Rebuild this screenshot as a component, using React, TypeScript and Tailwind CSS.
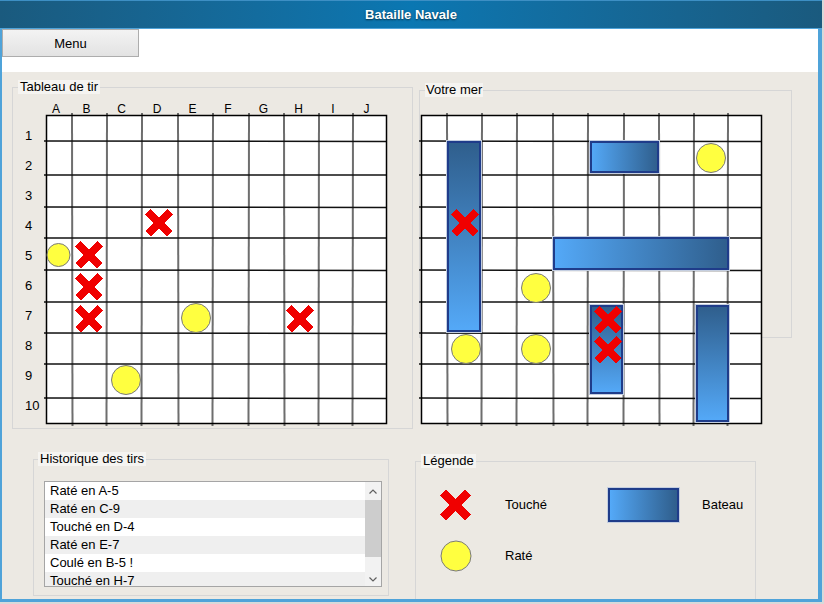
import React from 'react';

type Ship = { x: number; y: number; w: number; h: number; dir: 'v' | 'h' };
type Point = [number, number];
type Miss = [number, number, number?];

// positions of the hand-drawn grid lines (px, relative to the board)
const COLS = [0, 26, 61, 96, 132, 167, 203, 238, 273, 307, 340];
const ROWS = [0, 26, 60, 92, 123, 155, 187, 218, 249, 283, 308];

const LETTERS = ['A', 'B', 'C', 'D', 'E', 'F', 'G', 'H', 'I', 'J'];

const history = [
  'Raté en A-5',
  'Raté en C-9',
  'Touché en D-4',
  'Raté en E-7',
  'Coulé en B-5 !',
  'Touché en H-7',
];

const Cross = ({ cx, cy, r = 11, w = 8 }: { cx: number; cy: number; r?: number; w?: number }) => (
  <g transform={`translate(${cx} ${cy})`} shapeRendering="crispEdges">
    <line x1={-r} y1={-r} x2={r} y2={r} stroke="#f00000" strokeWidth={w} />
    <line x1={-r} y1={r} x2={r} y2={-r} stroke="#f00000" strokeWidth={w} />
  </g>
);

const Dot = ({ cx, cy, r = 14.5 }: { cx: number; cy: number; r?: number }) => (
  <circle cx={cx} cy={cy} r={r} fill="#ffff40" stroke="#7a7a7a" strokeWidth={1} />
);

const Board = ({ id, ships = [], hits, misses }: { id: string; ships?: Ship[]; hits: Point[]; misses: Miss[] }) => (
  <svg width={341} height={309} viewBox="0 0 341 309" className="block overflow-visible">
    <defs>
      <linearGradient id={`${id}-v`} x1="0" y1="0" x2="0" y2="1">
        <stop offset="0" stopColor="#2f5e8c" />
        <stop offset="1" stopColor="#54a9f8" />
      </linearGradient>
      <linearGradient id={`${id}-h`} x1="0" y1="0" x2="1" y2="0">
        <stop offset="0" stopColor="#54a9f8" />
        <stop offset="1" stopColor="#2f5e8c" />
      </linearGradient>
    </defs>
    <rect x={0} y={0} width={341} height={309} fill="#fff" />
    {COLS.slice(1, -1).map((x, i) => (
      <line key={'c' + i} x1={x} y1={-2} x2={x + (i % 3 === 0 ? 0.5 : -0.5)} y2={311} stroke="#4a4a4a" strokeWidth={2} strokeOpacity={0.8} />
    ))}
    {ROWS.slice(1, -1).map((y, i) => (
      <line key={'r' + i} x1={-2} y1={y} x2={340} y2={y + (i % 2 === 0 ? 0.5 : 0)} stroke="#111" strokeWidth={1.5} />
    ))}
    <rect x={0.5} y={0.5} width={340} height={308} fill="none" stroke="#000" strokeWidth={1.5} />
    {ships.map((s, i) => (
      <g key={'s' + i}>
        <rect x={s.x - 0.5} y={s.y - 0.5} width={s.w + 1} height={s.h + 1} fill="none" stroke="#c4cee0" strokeWidth={1} />
        <rect x={s.x + 1} y={s.y + 1} width={s.w - 2} height={s.h - 2} fill={`url(#${id}-${s.dir})`} stroke="#1f3c8a" strokeWidth={2} />
      </g>
    ))}
    {misses.map(([x, y, r], i) => (
      <Dot key={'m' + i} cx={x} cy={y} r={r ?? 14.5} />
    ))}
    {hits.map(([x, y], i) => (
      <Cross key={'h' + i} cx={x} cy={y} />
    ))}
  </svg>
);

const Chevron = ({ down = false }: { down?: boolean }) => (
  <svg width="8" height="5" viewBox="0 0 8 5">
    <polyline points={down ? '0.5,0.5 4,4 7.5,0.5' : '0.5,4.5 4,1 7.5,4.5'} fill="none" stroke="#606060" strokeWidth="1.2" />
  </svg>
);

export default function App() {
  return (
    <div className="w-[824px] h-[604px] bg-[#d9d9d9] font-[family-name:'Liberation_Sans',Arial,sans-serif] text-black">
      <div className="w-[822px] h-[602px] flex flex-col bg-[#4fa3d9]">
        {/* title bar */}
        <div className="h-[28px] flex items-center justify-center bg-gradient-to-r from-[#1a5a7e] via-[#0a77b2] to-[#1a5a7e] border-t border-[#3d8fc4]">
          <span className="text-white text-[13px] font-bold [text-shadow:0_1px_2px_rgba(0,0,0,0.6)]">Bataille Navale</span>
        </div>

        <div className="flex-1 flex flex-col ml-[2px] mr-[4px] mb-[3px] mt-[1px] min-h-0">
          {/* menu bar */}
          <div className="h-[43px] bg-white">
            <button className="w-[137px] h-[28px] border border-[#adadad] bg-gradient-to-b from-[#f3f3f3] to-[#e3e3e3] text-[13px] leading-none">
              Menu
            </button>
          </div>

          {/* content */}
          <div className="flex-1 bg-[#ece9e3] overflow-hidden">
            <div className="flex items-start pt-[8px] pl-[10px]">
              <fieldset className="w-[401px] h-[349px] border border-[#d6d6d6]">
                <legend className="ml-[5px] px-[2px] text-[13px] leading-[14px] bg-[#f5f4f1]">Tableau de tir</legend>
                <div className="mt-[10px] ml-[30px] h-[11px] grid grid-cols-[26px_35px_35px_36px_35px_36px_35px_35px_34px_33px] text-[12px] leading-[11px]">
                  {LETTERS.map((l) => (
                    <span key={l} className="text-center">{l}</span>
                  ))}
                </div>
                <div className="flex items-start">
                  <div className="w-[33px] pl-[12px] mt-[6px] flex flex-col text-[13px]">
                    {Array.from({ length: 10 }, (_, i) => (
                      <span key={i} className="h-[30px] leading-[30px]">{i + 1}</span>
                    ))}
                  </div>
                  <Board
                    id="tir"
                    hits={[[113, 108], [43, 140], [43, 172], [43, 204], [254, 204]]}
                    misses={[[12.5, 140, 11.5], [150, 203], [80, 265]]}
                  />
                </div>
              </fieldset>

              <fieldset className="w-[373px] h-[255px] ml-[6px] mt-[3px] border border-[#d6d6d6]">
                <legend className="ml-[5px] px-[1px] text-[13px] leading-[14px] bg-[#f5f4f1]">Votre mer</legend>
                <div className="mt-[18px] ml-[1px]">
                  <Board
                    id="mer"
                    ships={[
                      { x: 26, y: 26, w: 34, h: 191, dir: 'v' },
                      { x: 169, y: 26, w: 69, h: 32, dir: 'h' },
                      { x: 132, y: 122, w: 176, h: 33, dir: 'h' },
                      { x: 169, y: 190, w: 33, h: 89, dir: 'v' },
                      { x: 275, y: 190, w: 33, h: 117, dir: 'v' },
                    ]}
                    hits={[[44, 108], [187, 205], [187, 235]]}
                    misses={[[290, 43], [115, 173], [45, 234], [115, 234]]}
                  />
                </div>
              </fieldset>
            </div>

            <div className="flex items-start mt-[23px] pl-[31px]">
              <fieldset className="w-[356px] h-[144px] border border-[#d6d6d6]">
                <legend className="ml-[4px] px-[2px] text-[13px] leading-[14px] bg-[#f5f4f1]">Historique des tirs</legend>
                <div className="mt-[15px] ml-[10px] w-[338px] h-[106px] border border-[#a5a5a5] bg-white flex overflow-hidden">
                  <div className="flex-1 flex flex-col">
                    {history.map((h, i) => (
                      <div key={h} className={`h-[18px] shrink-0 leading-[18px] pl-[5px] text-[13px] ${i % 2 ? 'bg-[#efefef]' : 'bg-white'}`}>
                        {h}
                      </div>
                    ))}
                  </div>
                  <div className="w-[16px] flex flex-col bg-[#f2f2f2]">
                    <div className="h-[18px] flex items-center justify-center">
                      <Chevron />
                    </div>
                    <div className="h-[57px] bg-[#cdcdcd]" />
                    <div className="flex-1" />
                    <div className="h-[14px] flex items-center justify-center">
                      <Chevron down />
                    </div>
                  </div>
                </div>
              </fieldset>

              <fieldset className="w-[341px] h-[170px] ml-[26px] mt-[2px] border border-[#d6d6d6]">
                <legend className="ml-[5px] px-[2px] text-[13px] leading-[14px] bg-[#f5f4f1]">Légende</legend>
                <div className="mt-[17px] ml-[23px] grid grid-cols-[66px_103px_94px_auto] grid-rows-[40px_40px] gap-y-[11px] items-center text-[13px]">
                  <svg width="34" height="34" viewBox="0 0 34 34">
                    <Cross cx={16.5} cy={17} r={12.5} w={9} />
                  </svg>
                  <span>Touché</span>
                  <div className="w-[71px] h-[34px] border-2 border-[#1f3c8a] bg-gradient-to-r from-[#54a9f8] to-[#2f5e8c] shadow-[0_0_0_1px_#c4cee0]" />
                  <span>Bateau</span>
                  <svg width="34" height="34" viewBox="0 0 34 34">
                    <Dot cx={17} cy={17} r={15} />
                  </svg>
                  <span>Raté</span>
                </div>
              </fieldset>
            </div>
          </div>
        </div>
      </div>
    </div>
  );
}
